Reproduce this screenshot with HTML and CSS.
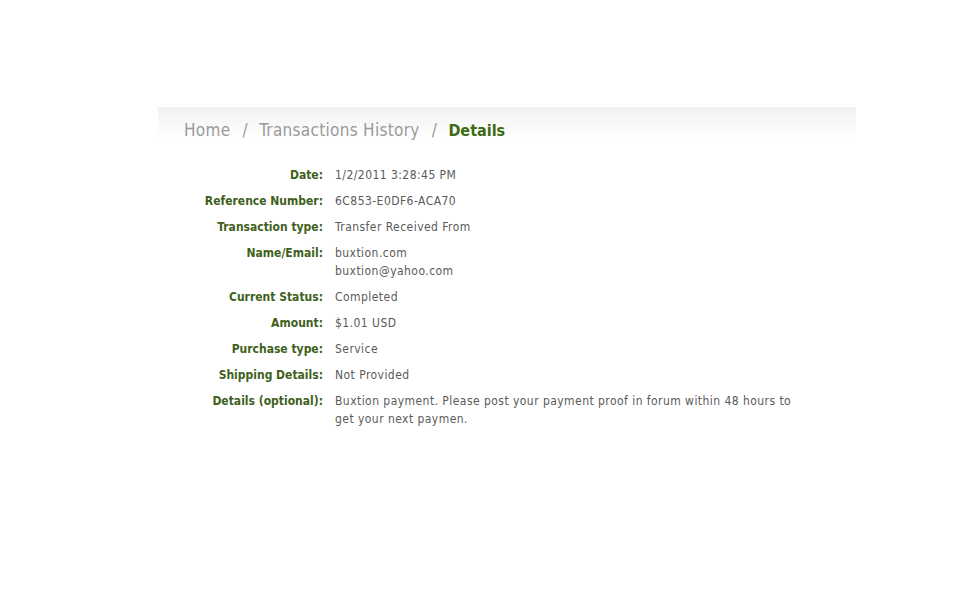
FILE: index.html
```html
<!DOCTYPE html>
<html>
<head>
<meta charset="utf-8">
<link rel="stylesheet" href="styles.css">
</head>
<body>
<div class="page">
  <div class="crumbs">
    <span class="crumb">Home</span>
    <span class="sep">/</span>
    <span class="crumb">Transactions History</span>
    <span class="sep">/</span>
    <span class="crumb current">Details</span>
  </div>
  <dl class="details">
    <div class="row"><dt>Date:</dt><dd>1/2/2011 3:28:45 PM</dd></div>
    <div class="row"><dt>Reference Number:</dt><dd>6C853-E0DF6-ACA70</dd></div>
    <div class="row"><dt>Transaction type:</dt><dd>Transfer Received From</dd></div>
    <div class="row"><dt>Name/Email:</dt><dd>buxtion.com<br>buxtion@yahoo.com</dd></div>
    <div class="row"><dt>Current Status:</dt><dd>Completed</dd></div>
    <div class="row"><dt>Amount:</dt><dd>$1.01 USD</dd></div>
    <div class="row"><dt>Purchase type:</dt><dd>Service</dd></div>
    <div class="row"><dt>Shipping Details:</dt><dd>Not Provided</dd></div>
    <div class="row"><dt>Details (optional):</dt><dd>Buxtion payment. Please post your payment proof in forum within 48 hours to get your next paymen.</dd></div>
  </dl>
</div>
</body>
</html>
```
FILE: styles.css
```css
html, body {
  margin: 0;
  padding: 0;
  background: #ffffff;
}
.page {
  width: 698px;
  margin-left: 158px;
  padding-top: 107px;
}
.crumbs {
  height: 31px;
  padding-left: 26px;
  padding-top: 12px;
  box-sizing: border-box;
  background: linear-gradient(to bottom, #f1f1f1 0%, #f8f8f8 50%, #ffffff 100%);
  font-family: "DejaVu Sans Condensed", "DejaVu Sans", sans-serif;
  font-size: 17px;
  line-height: 22px;
  letter-spacing: 0.3px;
  color: #9a9a9a;
  white-space: nowrap;
}
.sep {
  margin: 0 6px 0 7px;
}
.current {
  color: #3e6a14;
  font-weight: bold;
  font-size: 16px;
  letter-spacing: 0;
}
.details {
  margin: 28px 0 0 0;
  padding: 0;
  font-family: "DejaVu Sans Condensed", "DejaVu Sans", sans-serif;
  font-size: 12px;
  line-height: 18px;
}
.row {
  display: flex;
  margin-bottom: 8px;
}
.row dt {
  width: 165px;
  flex: none;
  text-align: right;
  font-weight: bold;
  color: #3f5f1c;
}
.row dd {
  margin: 0 0 0 12px;
  width: 465px;
  color: #5a5a5a;
  letter-spacing: 0.45px;
}
```
